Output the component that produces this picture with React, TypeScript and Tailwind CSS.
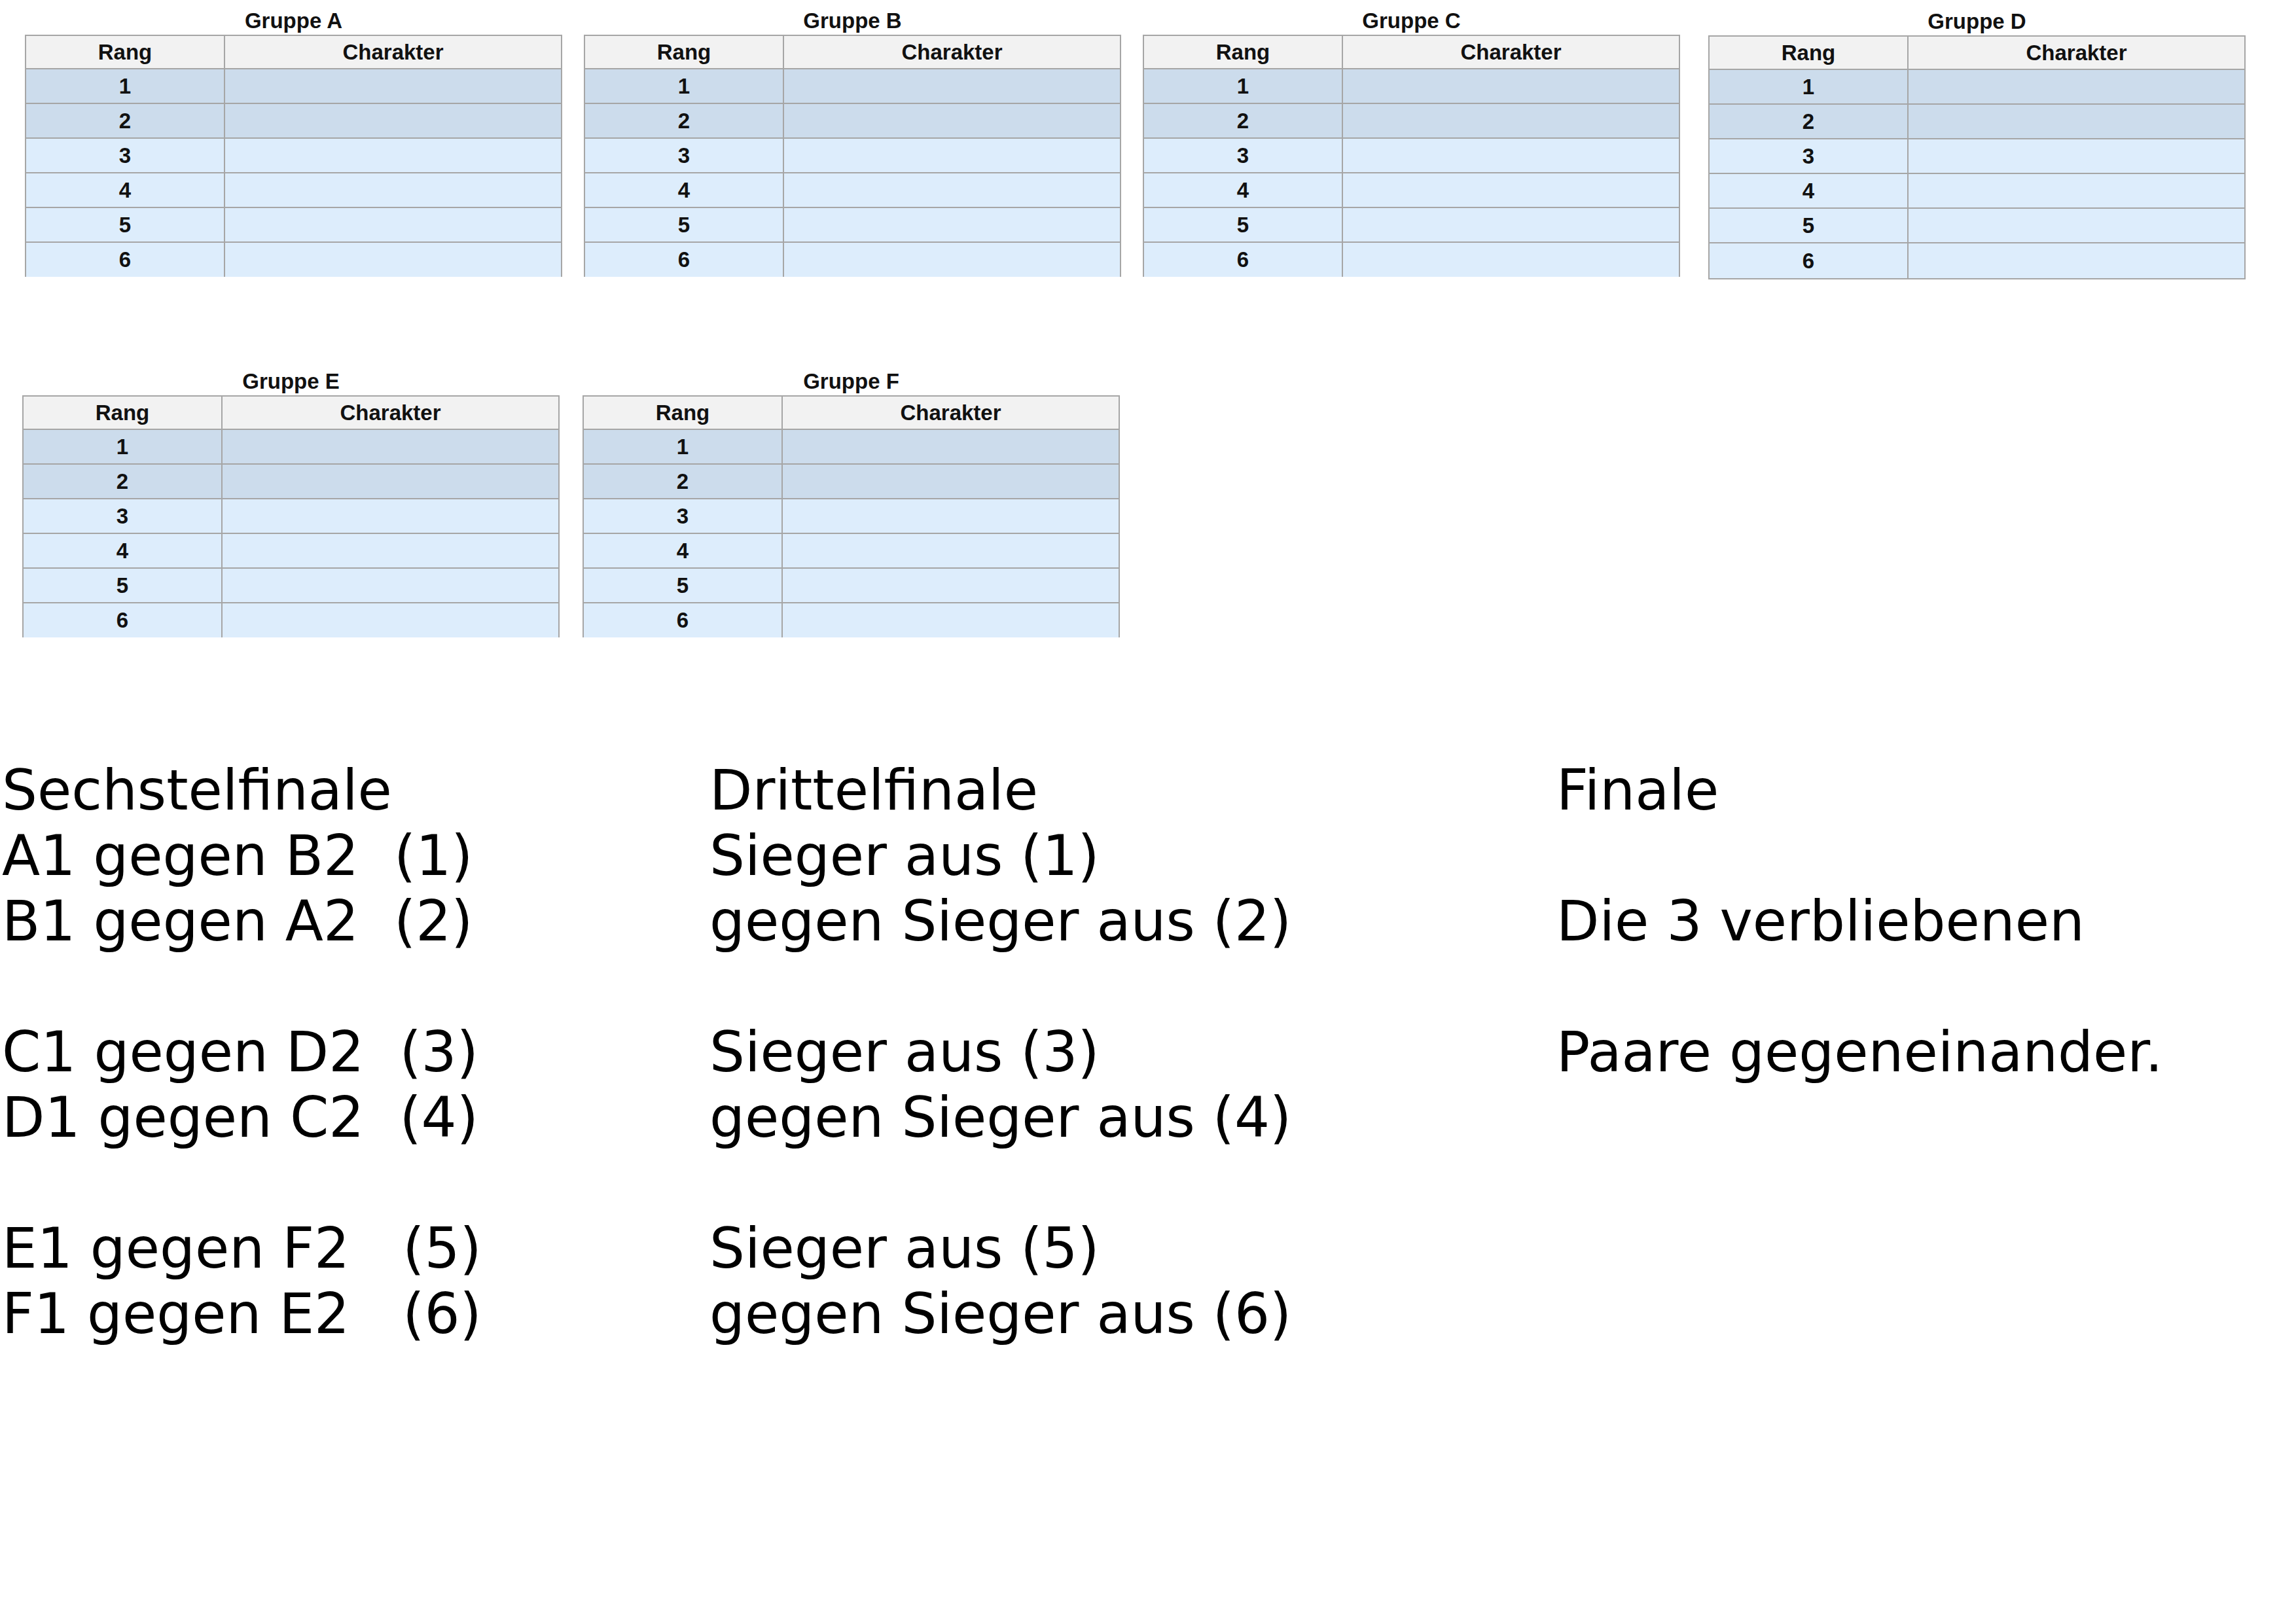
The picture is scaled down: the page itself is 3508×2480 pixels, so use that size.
import React from 'react';

const ranks = [1, 2, 3, 4, 5, 6];

type GroupProps = {
  label: string;
  closed?: boolean;
  className?: string;
};

const GroupTable: React.FC<GroupProps> = ({ label, closed = false, className = '' }) => {
  return (
    <div className={`w-[821px] shrink-0 ${className}`}>
      {/* title */}
      <div className="h-[53px] pt-[16px] text-center text-[33px] leading-[32px] font-bold text-[#111]">
        Gruppe {label}
      </div>

      <div className="border-x-2 border-t-2 border-[#a6a6a6] text-[33px] font-bold text-[#111]">
        <div className="flex h-[51px] border-b-2 border-[#a6a6a6] bg-[#f2f2f2]">
          <div className="flex w-[304px] items-center justify-center border-r-2 border-[#a6a6a6]">Rang</div>
          <div className="flex flex-1 items-center justify-center">Charakter</div>
        </div>

        {ranks.map(rank => {
          const last = rank === 6;
          const bg = rank <= 2 ? 'bg-[#ccdcec]' : 'bg-[#ddedfc]';
          let h = 'h-[53px] border-b-2 border-[#a6a6a6]';
          if (last) h = closed ? 'h-[55px] border-b-2 border-[#a6a6a6]' : 'h-[52px]';
          return (
            <div key={rank} className={`flex ${h} ${bg}`}>
              <div className="flex w-[304px] items-center justify-center border-r-2 border-[#a6a6a6]">{rank}</div>
              <div className="flex-1" />
            </div>
          );
        })}
      </div>
    </div>
  );
};

const col1 = [
  'Sechstelfinale',
  'A1 gegen B2  (1)',
  'B1 gegen A2  (2)',
  '',
  'C1 gegen D2  (3)',
  'D1 gegen C2  (4)',
  '',
  'E1 gegen F2   (5)',
  'F1 gegen E2   (6)',
];

const col2 = [
  'Drittelfinale',
  'Sieger aus (1)',
  'gegen Sieger aus (2)',
  '',
  'Sieger aus (3)',
  'gegen Sieger aus (4)',
  '',
  'Sieger aus (5)',
  'gegen Sieger aus (6)',
];

const col3 = ['Finale', '', 'Die 3 verbliebenen', '', 'Paare gegeneinander.'];

const TextColumn: React.FC<{ lines: string[]; className?: string }> = ({ lines, className = '' }) => (
  <div className={className}>
    {lines.map((line, i) => (
      <div key={i} className="h-[100px] whitespace-pre leading-[100px]">
        {line}
      </div>
    ))}
  </div>
);

export default function App() {
  return (
    <div className="min-h-[2480px] w-[3508px] bg-white">
      <div className="font-['Liberation_Sans',Arial,sans-serif]">
        {/* first row of groups */}
        <div className="flex pl-[38px]">
          <GroupTable label="A" />
          <GroupTable label="B" className="ml-[33px]" />
          <GroupTable label="C" className="ml-[33px]" />
          <GroupTable label="D" closed className="ml-[43px] mt-[1px]" />
        </div>

        {/* second row of groups */}
        <div className="mt-[124px] flex pl-[34px]">
          <GroupTable label="E" />
          <GroupTable label="F" className="ml-[35px]" />
        </div>
      </div>

      {/* tournament plan */}
      <div className="mt-[184px] flex pl-[3px] font-['DejaVu_Sans',sans-serif] text-[85px] text-black">
        <TextColumn lines={col1} className="w-[1081px]" />
        <TextColumn lines={col2} className="w-[1294px]" />
        <TextColumn lines={col3} className="flex-1" />
      </div>
    </div>
  );
}
